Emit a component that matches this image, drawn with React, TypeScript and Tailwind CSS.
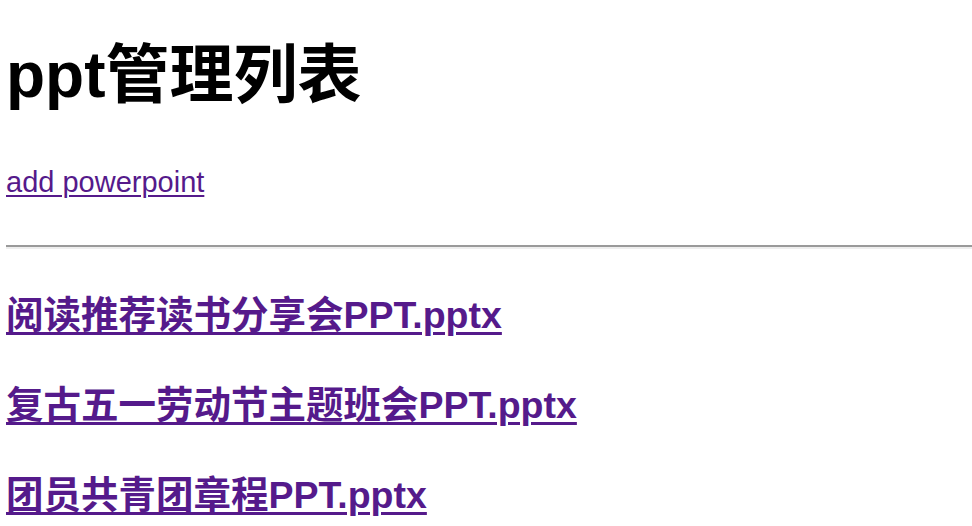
const files = [
  "阅读推荐读书分享会PPT.pptx",
  "复古五一劳动节主题班会PPT.pptx",
  "团员共青团章程PPT.pptx",
];

export default function App() {
  return (
    <div
      className="min-h-screen bg-white pl-[6px] text-black"
      style={{ fontFamily: '"Liberation Sans", "Noto Sans CJK SC", sans-serif' }}
    >
      <h1 className="pt-[43px] text-[64px] font-bold leading-none">ppt管理列表</h1>
      <a
        href="#"
        className="mt-[61px] block w-fit text-[29px] leading-none text-[#551a8b] underline decoration-2 underline-offset-[3px]"
      >
        add powerpoint
      </a>
      <hr className="mt-[48px] border-t-2 border-b-2 border-t-[#9a9a9a] border-b-[#eeeeee]" />
      <ul className="mt-[48px] flex flex-col gap-[52.5px]">
        {files.map((name) => (
          <li key={name}>
            <a
              href="#"
              className="block w-fit text-[37.5px] font-bold leading-none text-[#551a8b] underline decoration-[3px] underline-offset-[4px]"
            >
              {name}
            </a>
          </li>
        ))}
      </ul>
    </div>
  );
}
